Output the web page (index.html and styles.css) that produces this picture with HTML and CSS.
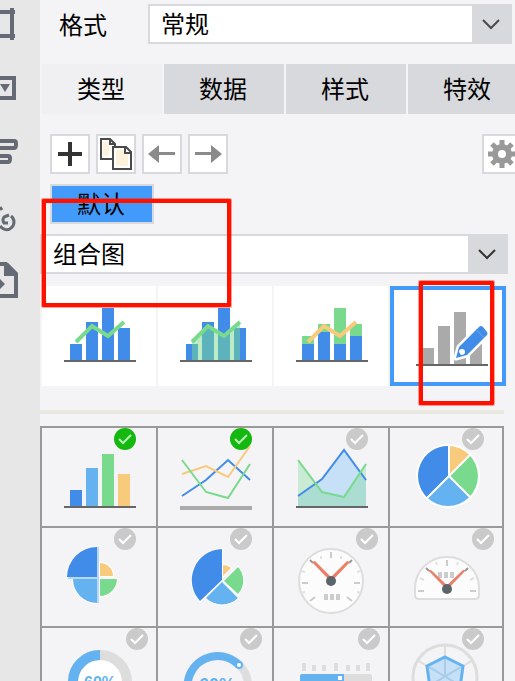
FILE: index.html
```html
<!DOCTYPE html>
<html lang="zh-CN">
<head>
<meta charset="utf-8">
<title>图表类型</title>
<link rel="stylesheet" href="styles.css">
</head>
<body>
<svg class="defs" aria-hidden="true">
  <symbol id="off" viewBox="0 0 22 22"><circle cx="11" cy="11" r="11" fill="#cacaca"/><path d="M5 11l4 4 8-8" fill="none" stroke="#fff" stroke-width="2"/></symbol>
  <symbol id="on" viewBox="0 0 22 22"><circle cx="11" cy="11" r="11" fill="#14b80f"/><path d="M5 11l4 4 8-8" fill="none" stroke="#b9f0b6" stroke-width="2"/></symbol>
</svg>
<div class="app">
  <nav class="rail">
    <button aria-label="裁剪"><svg viewBox="0 0 40 48"><path d="M0 12h15M0 36h15M12 8v32" fill="none" stroke="#666a75" stroke-width="4"/></svg></button>
    <button aria-label="控件"><svg viewBox="0 0 40 48"><path d="M0 14h14v20H0" fill="none" stroke="#666a75" stroke-width="4"/><path d="M0 20h10l-5 8z" fill="#666a75"/></svg></button>
    <button aria-label="对齐"><svg viewBox="0 0 40 48"><path d="M0 13h14q2 0 2 2v2q0 3-2 3H0M0 28h8q2 0 2 2v1q0 3-2 3H0" fill="none" stroke="#666a75" stroke-width="4"/></svg></button>
    <button aria-label="链接"><svg viewBox="0 0 40 48"><path d="M11 24C15 27 15 33 11 36C8 39 3 38 0 34M9 23L4 25Q2 28 4 31L8 31M0 15L2 18" fill="none" stroke="#666a75" stroke-width="3"/></svg></button>
    <button aria-label="文件"><svg viewBox="0 0 40 48"><path d="M0 8h6l10 10v22H0" fill="none" stroke="#666a75" stroke-width="4"/><path d="M4 7h4l10 10v3H4zM0 23l5 5-5 5z" fill="#666a75"/></svg></button>
  </nav>
  <main class="panel">
    <div class="format">
      <label for="format">格式</label>
      <div class="select"><select id="format"><option>常规</option></select><svg viewBox="0 0 40 40"><path d="M11 16l8 8 8-8" fill="none" stroke="#4a4a4a" stroke-width="2"/></svg></div>
    </div>
    <div class="tabs" role="tablist">
      <button class="tab active" role="tab">类型</button>
      <button class="tab" role="tab">数据</button>
      <button class="tab" role="tab">样式</button>
      <button class="tab" role="tab">特效</button>
    </div>
    <div class="toolbar">
      <button class="tool" aria-label="添加"><svg viewBox="0 0 36 36"><path d="M6 18h24M18 6v24" stroke="#333" stroke-width="4"/></svg></button>
      <button class="tool" aria-label="复制"><svg viewBox="0 0 36 36"><path d="M3 3h9l5 5v15H3z" fill="#fff" stroke="#4a4a4a" stroke-width="2"/><path d="M5 6h6v14H5z" fill="#fff2dc"/><path d="M15 11h13l5 5v17H15z" fill="#fff" stroke="#4a4a4a" stroke-width="2"/><path d="M18 14h8v4h4v12H18z" fill="#fff2dc"/><path d="M12 3v5h5M27 11v6h6" fill="none" stroke="#4a4a4a" stroke-width="2"/></svg></button>
      <button class="tool" aria-label="左移"><svg viewBox="0 0 36 36"><path d="M4 18l11-9v7h16v3H15v8z" fill="#8a8a8a"/></svg></button>
      <button class="tool" aria-label="右移"><svg viewBox="0 0 36 36"><path d="M32 18L21 9v7H5v3h16v8z" fill="#8a8a8a"/></svg></button>
      <button class="tool settings" aria-label="设置"><svg viewBox="0 0 36 36"><g stroke="#999" stroke-width="5"><path d="M18 4v28M4 18h28M8 8l20 20M28 8L8 28"/></g><circle cx="18" cy="18" r="10" fill="#999"/><circle cx="18" cy="18" r="4" fill="#fff"/></svg></button>
    </div>
    <button class="chip">默认</button>
    <div class="select kind"><select aria-label="图表类型"><option>组合图</option></select><svg viewBox="0 0 40 40"><path d="M11 16l8 8 8-8" fill="none" stroke="#333" stroke-width="2"/></svg></div>
    <div class="cards">
      <button class="card" aria-label="柱线图"><svg viewBox="0 0 114 100"><path d="M28 58h12v16H28zM44 36h12v38H44zM60 22h12v52H60zM76 42h12v32H76z" fill="#408ce8"/><path d="M22 74h72v2H22z" fill="#666"/><path d="M34 56l16-16 16 10 16-14" fill="none" stroke="#79da8d" stroke-width="4"/></svg></button>
      <button class="card" aria-label="柱面图"><svg viewBox="0 0 114 100"><path d="M28 58h12v16H28zM44 36h12v38H44zM60 22h12v52H60zM76 42h12v32H76z" fill="#408ce8"/><path d="M34 56l16-16 16 10 16-14v38H34z" fill="#79da8d" opacity=".5"/><path d="M22 74h72v2H22z" fill="#666"/><path d="M34 56l16-16 16 10 16-14" fill="none" stroke="#79da8d" stroke-width="4"/></svg></button>
      <button class="card" aria-label="堆积柱线图"><svg viewBox="0 0 114 100"><path d="M28 50h12v8H28zM44 38h12v8H44zM60 22h12v36H60zM76 38h12v12H76z" fill="#79da8d"/><path d="M28 58h12v16H28zM44 46h12v28H44zM60 58h12v16H60zM76 50h12v24H76z" fill="#408ce8"/><path d="M22 74h72v2H22z" fill="#666"/><path d="M34 56l16-16 16 10 16-14" fill="none" stroke="#f7cb7c" stroke-width="4"/></svg></button>
      <button class="card selected" aria-label="自定义组合"><svg viewBox="0 0 116 100"><path d="M32 62h12v16H32zM48 40h12v38H48zM64 26h12v52H64zM80 54h12v24H80z" fill="#aaa"/><path d="M26 78h72v2H26z" fill="#666"/><path d="M66 72l3-11 20-20q2-2 4 0l4 5q1 2 0 3L77 69z" fill="#408ce8" stroke="#fff" stroke-width="5" stroke-linejoin="round"/><path d="M66 72l3-11 20-20q2-2 4 0l4 5q1 2 0 3L77 69z" fill="#408ce8"/><path d="M86 43l8 9" stroke="#6fa9ee"/><path d="M69 66q0-3 3-3 3 0 3 3 0 3-4 3z" fill="#fff"/></svg></button>
    </div>
    <hr>
    <div class="charts">
      <button aria-label="柱形图"><svg viewBox="0 0 114 98"><path d="M28 62h12v16H28z" fill="#408ce8"/><path d="M44 40h12v38H44z" fill="#64b3f0"/><path d="M60 26h12v52H60z" fill="#79da8d"/><path d="M76 46h12v32H76z" fill="#f8ca7b"/><path d="M22 78h72v2H22z" fill="#666"/><use href="#on" x="72" width="22" height="22"/></svg></button>
      <button aria-label="折线图"><svg viewBox="0 0 114 98"><use href="#on" x="72" width="22" height="22"/><g fill="none" stroke-width="2"><path d="M24 68l24-16 22-20 22 20" stroke="#408ce8"/><path d="M24 46l24-8 22 11 22-31" stroke="#f8ca7b"/><path d="M24 32l24 32 22 6 22-34" stroke="#79da8d"/></g><path d="M22 78h72v4H22z" fill="#aaa"/></svg></button>
      <button aria-label="面积图"><svg viewBox="0 0 114 98"><path d="M24 68l24-17 22-29 22 30v26H24z" fill="#c6e0f7"/><path d="M24 32l24 32 22 5 22-33v42H24z" fill="#79da8d" opacity=".34"/><g fill="none" stroke-width="2"><path d="M24 68l24-17 22-29 22 30" stroke="#408ce8"/><path d="M24 32l24 32 22 5 22-33" stroke="#79da8d"/></g><path d="M22 78h72v2H22z" fill="#666"/><use href="#off" x="72" width="22" height="22"/></svg></button>
      <button aria-label="饼图"><svg viewBox="0 0 112 98"><use href="#off" x="72" width="22" height="22"/><circle cx="58" cy="48" r="32" fill="#fff"/><path d="M58 48V18A30 30 0 0 0 36.800 69.200z" fill="#408ce8"/><path d="M58 48V18A30 30 0 0 1 79.200 26.800z" fill="#f8ca7b"/><path d="M58 48L79.200 26.800A30 30 0 0 1 79.200 69.200z" fill="#79da8d"/><path d="M58 48L79.200 69.200A30 30 0 0 1 36.800 69.200z" fill="#64b3f0"/><path d="M59 17v31M59 48l22-22M59 48l22 22M59 48L37 70" stroke="#fff" stroke-width="2"/></svg></button>
      <button aria-label="玫瑰图"><svg viewBox="0 0 114 98"><g stroke="#fff" stroke-width="2" paint-order="stroke"><path d="M55 49V19A30 30 0 0 0 25 49z" fill="#408ce8"/><path d="M55 51v24A24 24 0 0 1 31 51z" fill="#64b3f0"/><path d="M58 48V35A13 13 0 0 1 71 48z" fill="#f8ca7b"/><path d="M58 51h17A17 17 0 0 1 58 68z" fill="#79da8d"/></g><path d="M56 19v56M26 50h31" stroke="#b5d8f7" stroke-width="2"/><use href="#off" x="72" width="22" height="22"/></svg></button>
      <button aria-label="不等弧玫瑰图"><svg viewBox="0 0 114 98"><g stroke="#fff" stroke-width="2" paint-order="stroke"><path d="M64 52V21A31 31 0 0 0 42 73z" fill="#408ce8"/><path d="M65 48V37A11 11 0 0 1 73 40z" fill="#f8ca7b"/><path d="M66 53L80 39A20 20 0 0 1 80 66z" fill="#79da8d"/><path d="M64 54L80 70A23 23 0 0 1 48 70z" fill="#64b3f0"/></g><use href="#off" x="72" width="22" height="22"/></svg></button>
      <button aria-label="仪表盘"><svg viewBox="0 0 114 98"><circle cx="57" cy="53" r="32" fill="#fcfcfc" stroke="#ddd" stroke-width="2"/><path d="M57 24v6M28 55h6M80 55h6M36 73l5-4M78 73l-5-4" stroke="#ccc" stroke-width="2"/><path d="M47 28v3M67 28v3M27 43l4 1M87 43l-4 1M27 65l4-1M87 65l-4-1" stroke="#e2e2e2" stroke-width="2"/><path d="M36 32l3 3M78 32l-3 3" stroke="#999" stroke-width="2"/><path d="M38 34l3-1 18 18-3 2zM76 34l-3-1-18 18 3 2z" fill="#ec7f67"/><circle cx="57" cy="53" r="5" fill="#5b6469"/><path d="M50 66h4v6h-4zM56 66h4v6h-4zM62 66h4v6h-4z" fill="#ccc"/><use href="#off" x="82" width="22" height="22"/></svg></button>
      <button aria-label="半圆仪表盘"><svg viewBox="0 0 112 98"><path d="M25 60A32 31 0 0 1 89 60v7q0 4-4 4H29q-4 0-4-4z" fill="#fcfcfc" stroke="#ddd" stroke-width="2"/><path d="M57 32v6M28 63h6M80 63h6" stroke="#ccc" stroke-width="2"/><path d="M46 34l1 3M68 34l-1 3M30 50l4 2M84 50l-4 2" stroke="#e2e2e2" stroke-width="2"/><path d="M48 44h4v6h-4zM54 44h4v6h-4zM60 44h4v6h-4z" fill="#ccc"/><path d="M36 40l3 3M78 40l-3 3" stroke="#999" stroke-width="2"/><path d="M38 42l3 0 18 17-3 2zM76 42l-3 0-18 17 3 2z" fill="#ec7f67"/><circle cx="57" cy="61" r="5" fill="#5b6469"/><use href="#off" x="82" width="22" height="22"/></svg></button>
      <button aria-label="百分比圆环"><svg viewBox="0 0 114 98"><circle cx="58" cy="54" r="27" fill="#fff" stroke="#ddd" stroke-width="10"/><path d="M58 27A27 27 0 0 0 58 81" fill="none" stroke="#64b3f0" stroke-width="10"/><text class="percent" x="58" y="60">60%</text><use href="#off" x="84" width="22" height="22"/></svg></button>
      <button aria-label="进度圆环"><svg viewBox="0 0 114 98"><circle cx="60" cy="58" r="30" fill="none" stroke="#ddd" stroke-width="8"/><path d="M81 37A30 30 0 1 0 60 88" fill="none" stroke="#64b3f0" stroke-width="8"/><circle cx="81" cy="37" r="3" fill="#fff" stroke="#64b3f0" stroke-width="2"/><text class="percent large" x="59" y="63">60%</text><use href="#off" x="82" width="22" height="22"/></svg></button>
      <button aria-label="试管仪表盘"><svg viewBox="0 0 114 98"><path d="M28 35h4v8h-4zM60 35h4v8h-4zM92 35h4v8h-4zM38 37h4v6h-4zM48 37h4v6h-4zM72 37h4v6h-4zM82 37h4v6h-4z" fill="#ddd"/><rect x="26" y="46" width="72" height="10" rx="2" fill="#ddd"/><path d="M28 46h42v10H28q-2 0-2-2v-6q0-2 2-2z" fill="#64b3f0"/><path d="M64 48h4v4h-4z" fill="#fff"/><use href="#off" x="84" width="22" height="22"/></svg></button>
      <button aria-label="雷达图"><svg viewBox="0 0 112 98"><circle cx="55" cy="49" r="32" fill="none" stroke="#ddd" stroke-width="3"/><path d="M55 17v12M27 32l10 6M83 32l-10 6" stroke="#ddd" stroke-width="2"/><path d="M55 29l18 9-3 22-15 8-15-8-3-22z" fill="#c6e0f7" stroke="#64b3f0" stroke-width="3"/><path d="M55 31v18M39 39l32 19M71 39L39 58" stroke="#a7cbe8" stroke-width="2"/><use href="#off" x="72" width="22" height="22"/></svg></button>
    </div>
    <div class="mark mark-kind"></div>
    <div class="mark mark-custom"></div>
  </main>
</div>
</body>
</html>
```
FILE: styles.css
```css
* { box-sizing: border-box; }
body {
  margin: 0;
  overflow: hidden;
  background: #f4f4f7;
  color: #000;
  font: 24px/34px "Noto Sans CJK SC", sans-serif;
}
button, select {
  margin: 0;
  padding: 0;
  border: 0;
  border-radius: 0;
  background: none;
  color: inherit;
  font: inherit;
}
svg { display: block; }
.defs { display: none; }
.app { display: flex; height: 100vh; overflow: hidden; }

.rail {
  flex: none;
  width: 40px;
  display: flex;
  flex-direction: column;
  gap: 16px;
  background: #e7e7e7;
}
.rail svg { width: 40px; height: 48px; }

.panel { position: relative; flex: 1; min-width: 0; padding-top: 4px; }
.format { display: flex; align-items: center; margin-right: 3px; }
.format label { width: 108px; padding-left: 19px; }
.select {
  display: flex;
  flex: 1;
  height: 40px;
  border: 2px solid #d8d9dc;
  background: #fff;
}
.select select { flex: 1; min-width: 0; padding: 0 0 2px 11px; appearance: none; outline: 0; }
.select svg { flex: none; width: 40px; height: 40px; margin: -2px; background: #d8d9dc; }

.tabs { display: flex; gap: 2px; margin: 20px 0 20px 2px; overflow: hidden; }
.tab { flex: none; width: 120px; height: 50px; padding: 0 2px 2px 0; background: #d8d9dc; }
.tab.active { background: #f0f0f2; }

.toolbar { display: flex; gap: 6px; padding-left: 10px; overflow: hidden; }
.tool { flex: none; width: 40px; height: 40px; border: 2px solid #d8d9dc; background: #fff; }
.tool svg { width: 36px; height: 36px; }
.settings { margin-left: auto; margin-right: -7px; }
.chip {
  display: block;
  width: 104px;
  height: 40px;
  margin: 10px 0 10px 10px;
  padding: 0 2px 2px 0;
  border: 2px solid #d8d9dc;
  background: #429bfa;
}
.kind { margin-right: 7px; }

.cards {
  display: grid;
  grid-template-columns: 114fr 114fr 114fr 116fr;
  gap: 2px;
  margin: 12px 9px 24px 2px;
}
.card { height: 100px; background: #fff; }
.cards svg, .charts svg { width: 100%; height: 100%; }
.selected { box-shadow: inset 0 0 0 4px #429bfa; }
hr {
  height: 4px;
  margin: 0 11px 12px 0;
  border: 0;
  border-top: 2px solid #ece9d8;
  background: #e7e7e7;
}
.charts {
  display: grid;
  grid-template-columns: 114fr 114fr 114fr 112fr;
  gap: 2px;
  margin-right: 11px;
  padding: 2px;
  background: #999;
}
.charts button { height: 98px; background: #f4f4f7; }
.percent { fill: #64b3f0; font: bold 16px "Liberation Sans", sans-serif; text-anchor: middle; }
.large { font-size: 18px; }

.mark {
  position: absolute;
  border: 4px solid #ff1100;
  border-radius: 1px;
  box-shadow: 0 0 0 1px rgba(255, 17, 0, 0.4);
  pointer-events: none;
}
.mark-kind { left: 2px; top: 199px; width: 189px; height: 108px; }
.mark-custom { left: 379px; top: 281px; width: 75px; height: 124px; }
```
